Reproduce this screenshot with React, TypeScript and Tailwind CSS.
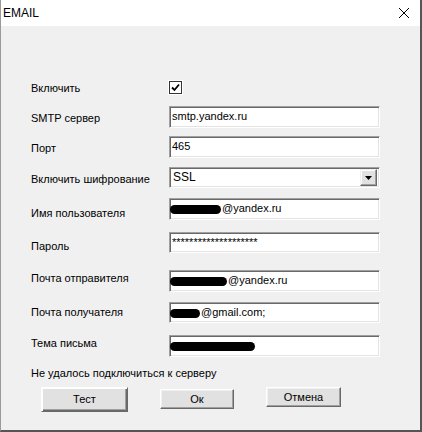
const fieldCls =
  "h-full w-[211px] bg-white border border-t-[#a0a0a0] border-l-[#a0a0a0] border-b-white border-r-white shadow-[inset_1px_1px_0_#696969,inset_-1px_-1px_0_#e3e3e3] pl-[2px] leading-[19px] text-black whitespace-nowrap overflow-hidden";

const Blob = ({ w }: { w: number }) => (
  <span
    className="-ml-[2px] mr-[1px] inline-block h-[9px] rounded-full bg-black align-middle"
    style={{ width: w }}
  />
);

const Row = ({
  label,
  rowH,
  fieldH,
  labelTop,
  children,
}: {
  label: string;
  rowH: number;
  fieldH: number;
  labelTop: number;
  children: React.ReactNode;
}) => (
  <div className="flex items-start" style={{ height: rowH }}>
    <div className="w-[138px] leading-[14px]" style={{ marginTop: labelTop }}>
      {label}
    </div>
    <div style={{ height: fieldH }}>{children}</div>
  </div>
);

const btnCls =
  "flex items-center justify-center bg-[#e1e1e1] border border-t-white border-l-white border-b-[#696969] border-r-[#696969] shadow-[inset_-1px_-1px_0_#a0a0a0,inset_1px_1px_0_#f0f0f0]";

export default function App() {
  return (
    <div
      className="flex h-[432px] w-[422px] flex-col border-l border-r-2 border-b-2 border-l-[#9a9a9a] border-r-[#555] border-b-[#555] bg-[#f0f0f0] text-[11px] text-black"
      style={{ fontFamily: '"Liberation Sans", Arial, sans-serif' }}
    >
      {/* title bar */}
      <div className="flex h-[26px] items-center justify-between bg-white pl-[2px] pr-[10px]">
        <span className="text-[12px]">EMAIL</span>
        <svg width="12" height="12" viewBox="0 0 12 12">
          <path d="M1 1L11 11M11 1L1 11" stroke="#000" strokeWidth="1" />
        </svg>
      </div>

      <div className="flex flex-col pl-[30px] pt-[55px]">
        <Row label="Включить" rowH={25} fieldH={13} labelTop={0}>
          <div className="flex h-[13px] w-[13px] items-center justify-center border border-[#333] bg-white shadow-[0_0_0_1px_#fff]">
            <svg width="9" height="9" viewBox="0 0 9 9">
              <path d="M1 4.5L3.5 7L8 1.5" stroke="#000" strokeWidth="1.8" fill="none" />
            </svg>
          </div>
        </Row>
        <Row label="SMTP сервер" rowH={30} fieldH={22} labelTop={5}>
          <div className={fieldCls}>smtp.yandex.ru</div>
        </Row>
        <Row label="Порт" rowH={31} fieldH={22} labelTop={5}>
          <div className={fieldCls}>465</div>
        </Row>
        <Row label="Включить шифрование" rowH={31} fieldH={21} labelTop={5}>
          <div className={`${fieldCls} flex items-start justify-between pr-[2px]`}>
            <span className="pl-[1px] text-[12px] leading-[18px]">SSL</span>
            <div className="mt-[1px] flex h-[17px] w-[17px] items-center justify-center bg-[#e1e1e1] border border-t-[#f0f0f0] border-l-[#f0f0f0] border-b-[#696969] border-r-[#696969] shadow-[inset_-1px_-1px_0_#a0a0a0,inset_1px_1px_0_#fff]">
              <svg width="7" height="4" viewBox="0 0 7 4">
                <path d="M0 0H7L3.5 4Z" fill="#000" />
              </svg>
            </div>
          </div>
        </Row>
        <Row label="Имя пользователя" rowH={34} fieldH={22} labelTop={8}>
          <div className={fieldCls}>
            <Blob w={51} />
            @yandex.ru
          </div>
        </Row>
        <Row label="Пароль" rowH={38} fieldH={21} labelTop={7}>
          <div className={`${fieldCls} leading-[13px]`}>********************</div>
        </Row>
        <Row label="Почта отправителя" rowH={32} fieldH={22} labelTop={1}>
          <div className={fieldCls}>
            <Blob w={57} />
            @yandex.ru
          </div>
        </Row>
        <Row label="Почта получателя" rowH={33} fieldH={21} labelTop={3}>
          <div className={fieldCls}>
            <Blob w={30} />
            @gmail.com;
          </div>
        </Row>
        <Row label="Тема письма" rowH={31} fieldH={22} labelTop={1}>
          <div className={fieldCls}>
            <Blob w={85} />
          </div>
        </Row>
        <div className="h-[21px] leading-[14px]">Не удалось подключиться к серверу</div>
        <div className="flex items-start pl-[10px]">
          <div className={`${btnCls} h-[25px] w-[87px] border-[#646464] shadow-[inset_1px_1px_0_#fff,inset_-1px_-1px_0_#696969,inset_-2px_-2px_0_#a0a0a0]`}>
            Тест
          </div>
          <div className={`${btnCls} ml-[32px] mt-[2px] h-[20px] w-[74px]`}>Ок</div>
          <div className={`${btnCls} ml-[32px] h-[20px] w-[75px]`}>Отмена</div>
        </div>
      </div>
    </div>
  );
}
